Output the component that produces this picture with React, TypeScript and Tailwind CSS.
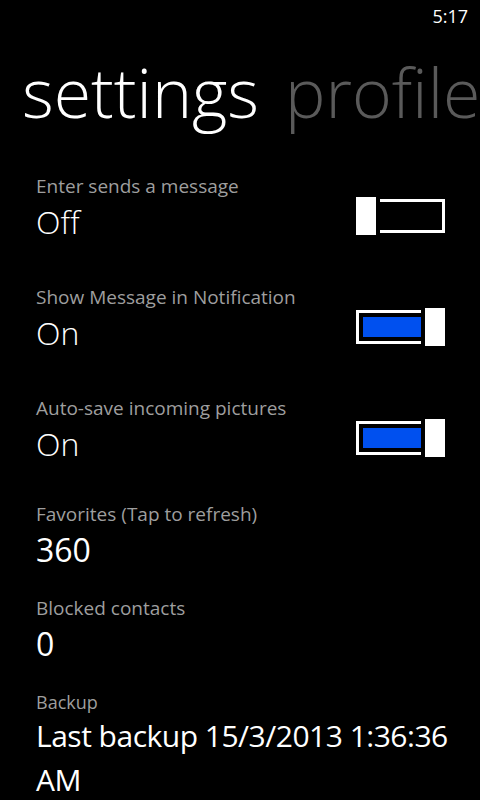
import * as React from "react";

const font = { fontFamily: '"Open Sans", "Noto Sans", sans-serif' };

function Toggle({ on }: { on: boolean }) {
  return (
    <div className="relative mt-[23px] h-[38px] w-[89px] shrink-0">
      {/* track */}
      <div className="absolute inset-x-0 top-[2px] h-[34px] border-[3px] border-white p-[4px]">
        {on && <div className="h-full w-[58px] bg-[#0050ef]" />}
      </div>
      {/* thumb */}
      <div
        className={
          on
            ? "absolute -top-[4px] -right-[4px] h-[46px] w-[28px] border-[4px] border-black bg-white"
            : "absolute -top-[4px] -left-[4px] h-[46px] w-[28px] border-[4px] border-black bg-white"
        }
      />
    </div>
  );
}

function ToggleRow({ label, on }: { label: string; on: boolean }) {
  return (
    <div className="flex items-start justify-between pr-[35px] pb-[43px]">
      <div>
        <div className="text-[19px] leading-[24px] text-[#9e9e9e]">{label}</div>
        <div className="mt-[4px] text-[32px] leading-[40px] font-light text-white">
          {on ? "On" : "Off"}
        </div>
      </div>
      <Toggle on={on} />
    </div>
  );
}

function InfoRow({ label, value }: { label: string; value: string }) {
  return (
    <div className="pb-[26px]">
      <div className="text-[19px] leading-[24px] text-[#9e9e9e]">{label}</div>
      <div className="mt-[4px] text-[32px] leading-[40px] text-white">{value}</div>
    </div>
  );
}

export default function App() {
  return (
    <div className="h-[800px] w-[480px] overflow-hidden bg-black" style={font}>
      {/* status bar */}
      <div className="flex h-[28px] justify-end pt-[4px] pr-[12px]">
        <span className="text-[18px] leading-[24px] text-white">5:17</span>
      </div>

      {/* pivot header */}
      <div className="mt-[30px] flex gap-[26px] pl-[22px] text-[68px] leading-[68px] font-light whitespace-nowrap">
        <span className="text-white">settings</span>
        <span className="text-[#5a5a5a]">profile</span>
      </div>

      <div className="mt-[48px] pl-[36px]">
        <ToggleRow label="Enter sends a message" on={false} />
        <ToggleRow label="Show Message in Notification" on />
        <ToggleRow label="Auto-save incoming pictures" on />

        <div className="-mt-[5px]">
          <InfoRow label="Favorites (Tap to refresh)" value="360" />
          <InfoRow label="Blocked contacts" value="0" />
          <div>
            <div className="text-[18px] leading-[24px] text-[#9e9e9e]">Backup</div>
            <div className="text-[30px] leading-[44px] tracking-[-0.5px] text-white">
              <span className="whitespace-nowrap">Last backup 15/3/2013 1:36:36</span>
              <br />
              AM
            </div>
          </div>
        </div>
      </div>
    </div>
  );
}
